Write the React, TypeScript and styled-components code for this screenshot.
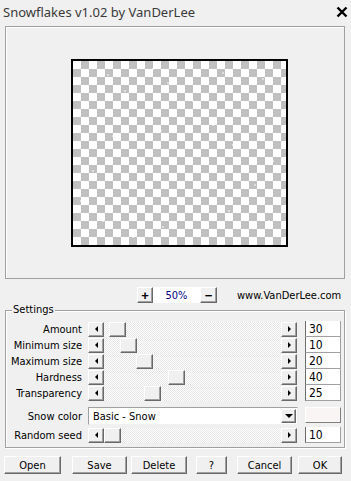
import React from "react";
import styled, { createGlobalStyle, css } from "styled-components";

const GlobalStyle = createGlobalStyle`
  html, body { margin: 0; padding: 0; background: #f0f0f0; }
  body { font-family: "Liberation Sans", Arial, sans-serif; }
  * { box-sizing: border-box; }
`;

const raised = css`
  background: #f0f0f0;
  border: 1px solid;
  border-color: #ffffff #696969 #696969 #ffffff;
  box-shadow: inset -1px -1px 0 #a0a0a0;
`;

const uiFont = css`
  font-family: "DejaVu Sans Condensed", "DejaVu Sans", sans-serif;
  font-stretch: condensed;
  font-size: 11px;
  color: #000;
`;

const Window = styled.div`
  width: 351px;
  height: 481px;
  background: #f0f0f0;
  overflow: hidden;
  display: flex;
  flex-direction: column;
`;

const TitleBar = styled.div`
  height: 24px;
  display: flex;
  align-items: center;
  justify-content: space-between;
  padding: 0 3px 0 3px;
`;

const TitleText = styled.span`
  font-family: "Noto Sans", "Open Sans", sans-serif;
  font-size: 13px;
  color: #3a3a3a;
`;

const PreviewPane = styled.div`
  margin: 2px 6px 0 5px;
  height: 253px;
  border: 1px solid #a0a0a0;
  box-shadow: inset 1px 1px 0 #ffffff;
  padding: 32px 0 0 65px;
`;

const Canvas = styled.div`
  width: 217px;
  height: 188px;
  border: 2px solid #000;
  background-color: #fff;
  background-image: conic-gradient(#c0c0c0 0 25%, #ffffff 0 50%, #c0c0c0 0 75%, #ffffff 0);
  background-size: 16px 16px;
  display: flex;
`;

const ZoomBar = styled.div`
  margin-top: 8px;
  height: 16px;
  display: flex;
  align-items: center;
  padding-left: 137px;
`;

const ZoomButton = styled.div<{ $w: number }>`
  ${raised};
  width: ${(p) => p.$w}px;
  height: 16px;
  display: flex;
  align-items: center;
  justify-content: center;
  font-family: "Liberation Sans", Arial, sans-serif;
  font-weight: bold;
  font-size: 13px;
  line-height: 1;
  color: #000;
`;

const ZoomValue = styled.div`
  width: 47px;
  height: 16px;
  background: #ffffff;
  display: flex;
  align-items: center;
  justify-content: center;
  ${uiFont};
  color: #000080;
`;

const SiteLink = styled.span`
  margin-left: 20px;
  ${uiFont};
`;

const Group = styled.div`
  position: relative;
  margin: 7px 6px 0 5px;
  border: 1px solid #a0a0a0;
  box-shadow: inset 1px 1px 0 #ffffff, 1px 1px 0 #ffffff;
  padding: 10px 0 4px 0;
`;

const GroupLegend = styled.span`
  position: absolute;
  top: -9px;
  left: 6px;
  padding: 0 1px;
  background: #f0f0f0;
  line-height: 16px;
  ${uiFont};
`;

const Row = styled.div<{ $mt?: number; $h?: number }>`
  display: flex;
  align-items: center;
  height: ${(p) => p.$h ?? 16}px;
  margin-top: ${(p) => p.$mt ?? 0}px;
`;

const RowLabel = styled.span`
  width: 76px;
  text-align: right;
  ${uiFont};
  white-space: nowrap;
`;

const ScrollBar = styled.div`
  margin-left: 6px;
  width: 209px;
  height: 15px;
  display: flex;
`;

const ScrollBtn = styled.div`
  ${raised};
  width: 16px;
  height: 15px;
  display: flex;
  align-items: center;
  justify-content: center;
  flex: none;
`;

const Arrow = styled.span<{ $dir: "left" | "right" | "down" }>`
  width: 0;
  height: 0;
  ${(p) =>
    p.$dir === "left"
      ? css`
          border-top: 3px solid transparent;
          border-bottom: 3px solid transparent;
          border-right: 3px solid #000;
        `
      : p.$dir === "right"
      ? css`
          border-top: 3px solid transparent;
          border-bottom: 3px solid transparent;
          border-left: 3px solid #000;
        `
      : css`
          border-left: 4px solid transparent;
          border-right: 4px solid transparent;
          border-top: 4px solid #000;
        `}
`;

const Track = styled.div`
  flex: 1;
  height: 15px;
  display: flex;
  background-color: #f4f4f4;
  background-image: repeating-conic-gradient(#ffffff 0 25%, #e6e6e6 0 50%);
  background-size: 2px 2px;
`;

const Thumb = styled.div`
  ${raised};
  width: 17px;
  height: 15px;
  flex: none;
`;

const NumField = styled.div`
  margin-left: 8px;
  width: 36px;
  height: 16px;
  background: #ffffff;
  border-left: 1px solid #6d6d6d;
  border-right: 1px solid #a0a0a0;
  border-bottom: 1px solid #a0a0a0;
  padding-left: 3px;
  display: flex;
  align-items: center;
  ${uiFont};
  font-size: 12px;
`;

const Combo = styled.div`
  margin-left: 6px;
  width: 210px;
  height: 18px;
  background: #ffffff;
  border: 1px solid;
  border-color: #a0a0a0 #f0f0f0 #f0f0f0 #a0a0a0;
  display: flex;
  align-items: center;
  padding: 1px;
`;

const ComboText = styled.span`
  flex: 1;
  padding-left: 3px;
  ${uiFont};
`;

const ComboBtn = styled.div`
  ${raised};
  width: 15px;
  height: 14px;
  display: flex;
  align-items: center;
  justify-content: center;
`;

const Swatch = styled.div`
  margin-left: 7px;
  width: 36px;
  height: 16px;
  background: #faf5f5;
  border: 1px solid;
  border-color: #ffffff #808080 #808080 #ffffff;
  align-self: flex-start;
`;

const ButtonBar = styled.div`
  margin-top: 8px;
  display: flex;
  height: 18px;
`;

const DialogButton = styled.div<{ $w: number; $ml: number }>`
  ${raised};
  width: ${(p) => p.$w}px;
  margin-left: ${(p) => p.$ml}px;
  height: 18px;
  display: flex;
  align-items: center;
  justify-content: center;
  ${uiFont};
`;

const sliders = [
  { label: "Amount", value: 30, thumb: 5 },
  { label: "Minimum size", value: 10, thumb: 16 },
  { label: "Maximum size", value: 20, thumb: 32 },
  { label: "Hardness", value: 40, thumb: 64 },
  { label: "Transparency", value: 25, thumb: 40 },
];

const buttons = [
  { text: "Open", w: 57, ml: 4 },
  { text: "Save", w: 55, ml: 11 },
  { text: "Delete", w: 56, ml: 4 },
  { text: "?", w: 31, ml: 9 },
  { text: "Cancel", w: 55, ml: 10 },
  { text: "OK", w: 44, ml: 6 },
];

const flakes: [number, number][] = [
  [10, 10], [35, 14], [52, 30], [80, 8], [95, 22], [120, 40], [150, 12], [170, 28],
  [190, 18], [205, 44], [12, 60], [40, 75], [66, 52], [88, 70], [110, 90], [140, 64],
  [160, 84], [186, 72], [200, 100], [20, 110], [48, 128], [74, 140], [100, 118],
  [130, 134], [156, 150], [182, 124], [30, 160], [60, 176], [90, 166], [124, 172],
  [150, 180], [196, 160], [8, 140], [210, 178],
];

function SliderRow({ label, value, thumb }: { label: string; value: number; thumb: number }) {
  return (
    <Row>
      <RowLabel>{label}</RowLabel>
      <ScrollBar>
        <ScrollBtn>
          <Arrow $dir="left" />
        </ScrollBtn>
        <Track>
          <Thumb style={{ marginLeft: thumb }} />
        </Track>
        <ScrollBtn>
          <Arrow $dir="right" />
        </ScrollBtn>
      </ScrollBar>
      <NumField>{value}</NumField>
    </Row>
  );
}

export default function App() {
  return (
    <Window>
      <GlobalStyle />
      <TitleBar>
        <TitleText>Snowflakes v1.02 by VanDerLee</TitleText>
        <svg width="12" height="12" viewBox="0 0 12 12">
          <path d="M1.5 1.5 L10.5 10.5 M10.5 1.5 L1.5 10.5" stroke="#000" strokeWidth="2.4" />
        </svg>
      </TitleBar>
      <PreviewPane>
        <Canvas>
          <svg width="213" height="184" viewBox="0 0 213 184">
            {flakes.map(([x, y], i) => (
              <circle key={i} cx={x} cy={y} r={0.9} fill="#ffffff" opacity={0.7} />
            ))}
          </svg>
        </Canvas>
      </PreviewPane>
      <ZoomBar>
        <ZoomButton $w={16}>+</ZoomButton>
        <ZoomValue>50%</ZoomValue>
        <ZoomButton $w={17}>−</ZoomButton>
        <SiteLink>www.VanDerLee.com</SiteLink>
      </ZoomBar>
      <Group>
        <GroupLegend>Settings</GroupLegend>
        {sliders.map((s) => (
          <SliderRow key={s.label} {...s} />
        ))}
        <Row $mt={6} $h={18}>
          <RowLabel>Snow color</RowLabel>
          <Combo>
            <ComboText>Basic - Snow</ComboText>
            <ComboBtn>
              <Arrow $dir="down" />
            </ComboBtn>
          </Combo>
          <Swatch />
        </Row>
        <Row $mt={2}>
          <RowLabel>Random seed</RowLabel>
          <ScrollBar>
            <ScrollBtn>
              <Arrow $dir="left" />
            </ScrollBtn>
            <Track>
              <Thumb style={{ marginLeft: 0 }} />
            </Track>
            <ScrollBtn>
              <Arrow $dir="right" />
            </ScrollBtn>
          </ScrollBar>
          <NumField>10</NumField>
        </Row>
      </Group>
      <ButtonBar>
        {buttons.map((b) => (
          <DialogButton key={b.text} $w={b.w} $ml={b.ml}>
            {b.text}
          </DialogButton>
        ))}
      </ButtonBar>
    </Window>
  );
}
